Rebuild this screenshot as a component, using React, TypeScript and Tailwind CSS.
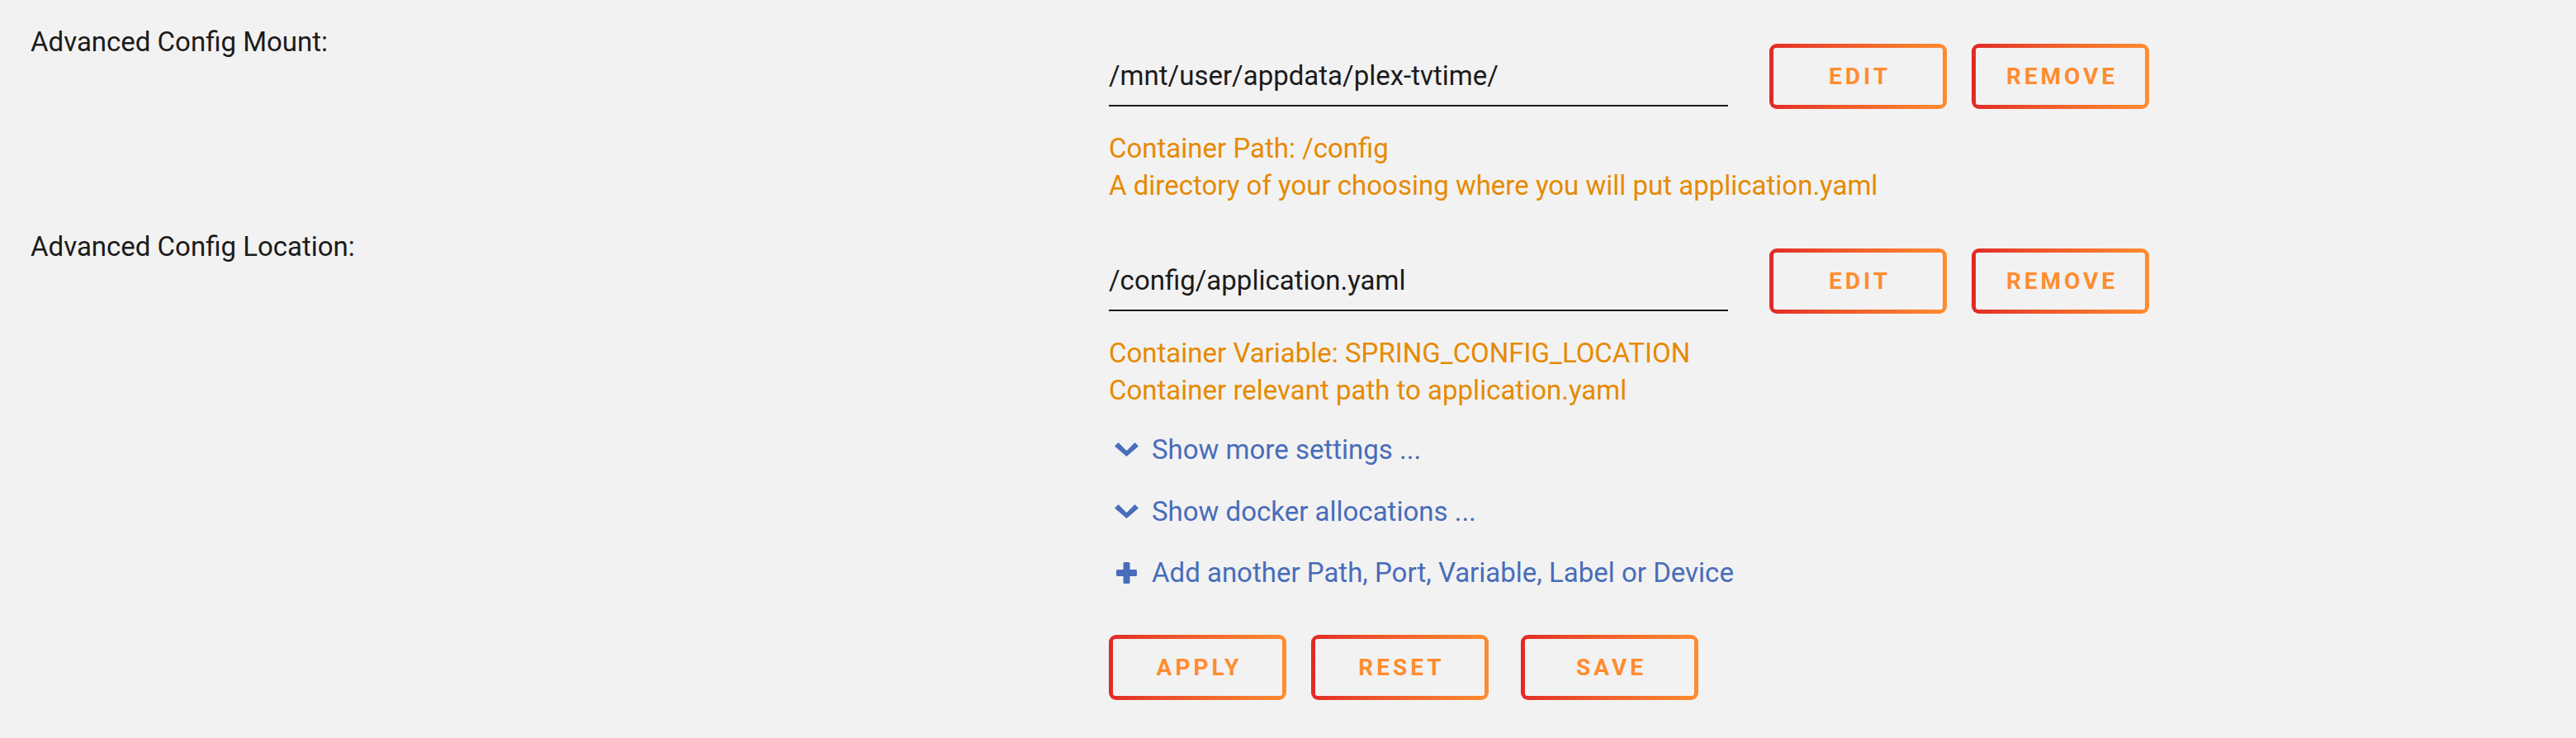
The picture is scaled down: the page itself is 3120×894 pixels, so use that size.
import React from 'react';

const rows = [
  {
    label: 'Advanced Config Mount:',
    value: '/mnt/user/appdata/plex-tvtime/',
    notes: ['Container Path: /config', 'A directory of your choosing where you will put application.yaml'],
  },
  {
    label: 'Advanced Config Location:',
    value: '/config/application.yaml',
    notes: ['Container Variable: SPRING_CONFIG_LOCATION', 'Container relevant path to application.yaml'],
  },
];

function GradientButton({ label, className = '' }: { label: string; className?: string }) {
  return (
    <button
      className={`h-[79px] w-[215px] shrink-0 rounded-[9px] bg-linear-to-r from-[#e22828] to-[#ff8c2f] p-[5px] ${className}`}
    >
      <span className="flex h-full w-full items-center justify-center rounded-[3px] bg-[#f2f2f2] pl-[4px] text-[28px] font-bold tracking-[4px] text-[#ff8c2f]">
        {label}
      </span>
    </button>
  );
}

function ChevronDown() {
  return (
    <svg width="29" height="17" viewBox="0 0 29 17" className="ml-[7px]">
      <polygon points="0,4.5 4.5,0 14.5,10 24.5,0 29,4.5 14.5,17" fill="#486dba" />
    </svg>
  );
}

function Plus() {
  return (
    <svg width="25" height="26" viewBox="0 0 25 26" className="ml-[9px]">
      <rect x="0" y="9" width="25" height="8" rx="1.5" fill="#486dba" />
      <rect x="8.5" y="0" width="8" height="26" rx="1.5" fill="#486dba" />
    </svg>
  );
}

function ConfigRow({ label, value, notes }: { label: string; value: string; notes: string[] }) {
  return (
    <div className="flex pt-[28px] pb-px">
      <div className="w-[1343px] shrink-0 pl-[37px] leading-[45px]">{label}</div>
      <div className="mt-[25px]">
        <div className="flex items-start">
          <div className="w-[750px] border-b-2 border-[#1c1b1b] pt-[16px] pb-[13px] leading-[45px]">{value}</div>
          <div className="ml-[50px] flex gap-[30px]">
            <GradientButton label="EDIT" />
            <GradientButton label="REMOVE" />
          </div>
        </div>
        <div className="mt-[25px] leading-[45px] text-[#e68a00]">
          {notes.map((n) => (
            <div key={n}>{n}</div>
          ))}
        </div>
      </div>
    </div>
  );
}

export default function App() {
  return (
    <div className="min-h-screen w-full bg-[#f2f2f2] font-['Roboto','Liberation_Sans',sans-serif] text-[33px] text-[#1c1b1b]">
      {rows.map((r) => (
        <ConfigRow key={r.label} {...r} />
      ))}

      {/* links */}
      <div className="mt-[26px] flex flex-col gap-[29.5px] pl-[1343px] leading-[45px] text-[#486dba]">
        <div className="flex items-center">
          <div className="w-[52px] shrink-0">
            <ChevronDown />
          </div>
          <span>Show more settings ...</span>
        </div>
        <div className="flex items-center">
          <div className="w-[52px] shrink-0">
            <ChevronDown />
          </div>
          <span>Show docker allocations ...</span>
        </div>
        <div className="flex items-center">
          <div className="w-[52px] shrink-0">
            <Plus />
          </div>
          <span>Add another Path, Port, Variable, Label or Device</span>
        </div>
      </div>

      {/* actions */}
      <div className="mt-[53px] flex pl-[1343px]">
        <GradientButton label="APPLY" className="mr-[30px]" />
        <GradientButton label="RESET" className="mr-[39px]" />
        <GradientButton label="SAVE" />
      </div>
    </div>
  );
}
